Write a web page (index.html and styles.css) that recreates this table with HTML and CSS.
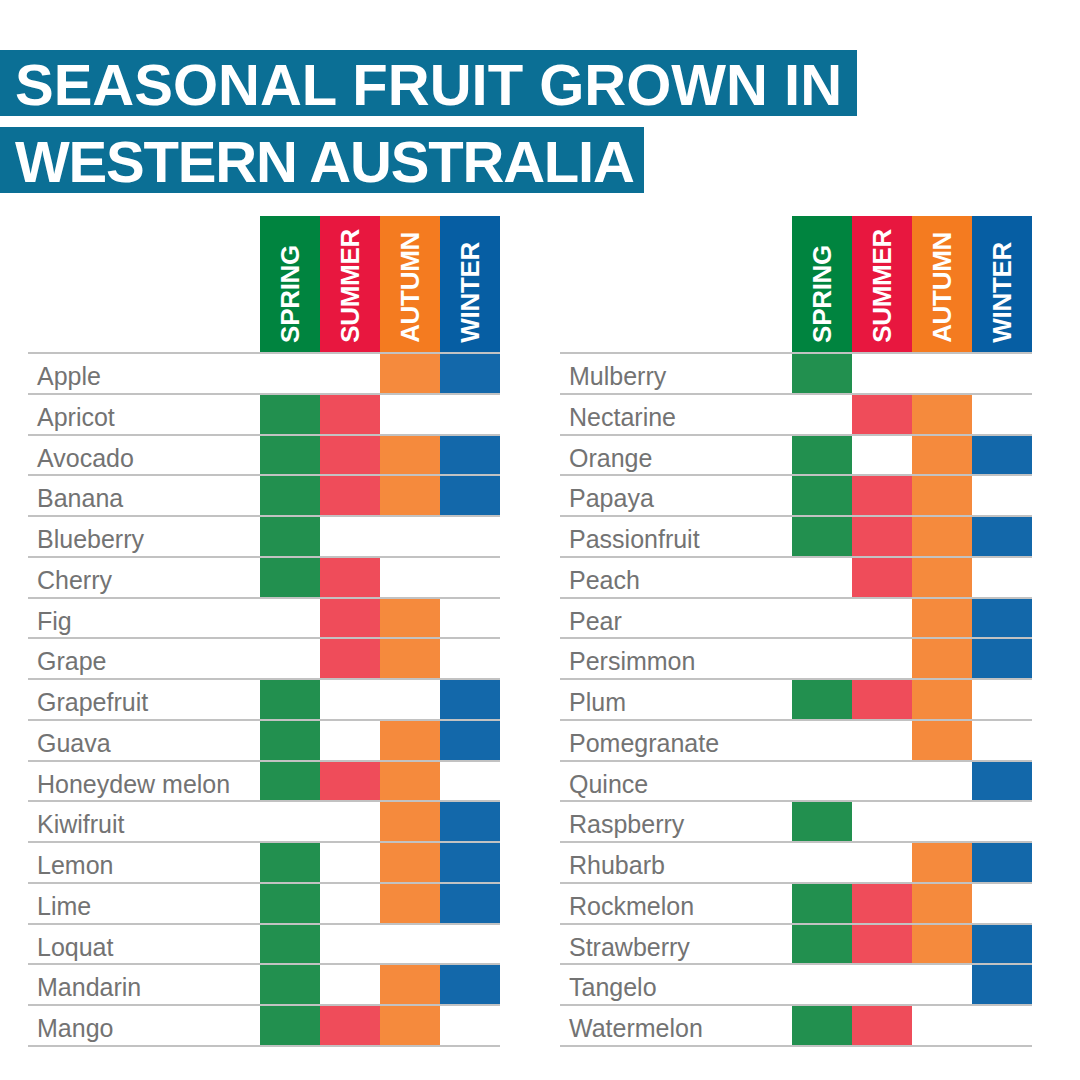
FILE: index.html
```html
<!DOCTYPE html>
<html lang="en">
<head>
<meta charset="utf-8">
<title>Seasonal fruit grown in Western Australia</title>
<link rel="stylesheet" href="styles.css">
</head>
<body>
<header class="title">
  <h1 class="bar bar-1">SEASONAL FRUIT GROWN IN</h1>
  <h1 class="bar bar-2">WESTERN AUSTRALIA</h1>
</header>
<main class="tables">
  <section class="chart">
    <div class="head">
      <div class="head-label"></div>
      <div class="hc sp"><span>SPRING</span></div>
      <div class="hc su"><span>SUMMER</span></div>
      <div class="hc au"><span>AUTUMN</span></div>
      <div class="hc wi"><span>WINTER</span></div>
    </div>
    <div class="body">
      <div class="row"><div class="name">Apple</div><div class="c"></div><div class="c"></div><div class="c au"></div><div class="c wi"></div></div>
      <div class="row"><div class="name">Apricot</div><div class="c sp"></div><div class="c su"></div><div class="c"></div><div class="c"></div></div>
      <div class="row"><div class="name">Avocado</div><div class="c sp"></div><div class="c su"></div><div class="c au"></div><div class="c wi"></div></div>
      <div class="row"><div class="name">Banana</div><div class="c sp"></div><div class="c su"></div><div class="c au"></div><div class="c wi"></div></div>
      <div class="row"><div class="name">Blueberry</div><div class="c sp"></div><div class="c"></div><div class="c"></div><div class="c"></div></div>
      <div class="row"><div class="name">Cherry</div><div class="c sp"></div><div class="c su"></div><div class="c"></div><div class="c"></div></div>
      <div class="row"><div class="name">Fig</div><div class="c"></div><div class="c su"></div><div class="c au"></div><div class="c"></div></div>
      <div class="row"><div class="name">Grape</div><div class="c"></div><div class="c su"></div><div class="c au"></div><div class="c"></div></div>
      <div class="row"><div class="name">Grapefruit</div><div class="c sp"></div><div class="c"></div><div class="c"></div><div class="c wi"></div></div>
      <div class="row"><div class="name">Guava</div><div class="c sp"></div><div class="c"></div><div class="c au"></div><div class="c wi"></div></div>
      <div class="row"><div class="name">Honeydew melon</div><div class="c sp"></div><div class="c su"></div><div class="c au"></div><div class="c"></div></div>
      <div class="row"><div class="name">Kiwifruit</div><div class="c"></div><div class="c"></div><div class="c au"></div><div class="c wi"></div></div>
      <div class="row"><div class="name">Lemon</div><div class="c sp"></div><div class="c"></div><div class="c au"></div><div class="c wi"></div></div>
      <div class="row"><div class="name">Lime</div><div class="c sp"></div><div class="c"></div><div class="c au"></div><div class="c wi"></div></div>
      <div class="row"><div class="name">Loquat</div><div class="c sp"></div><div class="c"></div><div class="c"></div><div class="c"></div></div>
      <div class="row"><div class="name">Mandarin</div><div class="c sp"></div><div class="c"></div><div class="c au"></div><div class="c wi"></div></div>
      <div class="row"><div class="name">Mango</div><div class="c sp"></div><div class="c su"></div><div class="c au"></div><div class="c"></div></div>
    </div>
  </section>
  <section class="chart">
    <div class="head">
      <div class="head-label"></div>
      <div class="hc sp"><span>SPRING</span></div>
      <div class="hc su"><span>SUMMER</span></div>
      <div class="hc au"><span>AUTUMN</span></div>
      <div class="hc wi"><span>WINTER</span></div>
    </div>
    <div class="body">
      <div class="row"><div class="name">Mulberry</div><div class="c sp"></div><div class="c"></div><div class="c"></div><div class="c"></div></div>
      <div class="row"><div class="name">Nectarine</div><div class="c"></div><div class="c su"></div><div class="c au"></div><div class="c"></div></div>
      <div class="row"><div class="name">Orange</div><div class="c sp"></div><div class="c"></div><div class="c au"></div><div class="c wi"></div></div>
      <div class="row"><div class="name">Papaya</div><div class="c sp"></div><div class="c su"></div><div class="c au"></div><div class="c"></div></div>
      <div class="row"><div class="name">Passionfruit</div><div class="c sp"></div><div class="c su"></div><div class="c au"></div><div class="c wi"></div></div>
      <div class="row"><div class="name">Peach</div><div class="c"></div><div class="c su"></div><div class="c au"></div><div class="c"></div></div>
      <div class="row"><div class="name">Pear</div><div class="c"></div><div class="c"></div><div class="c au"></div><div class="c wi"></div></div>
      <div class="row"><div class="name">Persimmon</div><div class="c"></div><div class="c"></div><div class="c au"></div><div class="c wi"></div></div>
      <div class="row"><div class="name">Plum</div><div class="c sp"></div><div class="c su"></div><div class="c au"></div><div class="c"></div></div>
      <div class="row"><div class="name">Pomegranate</div><div class="c"></div><div class="c"></div><div class="c au"></div><div class="c"></div></div>
      <div class="row"><div class="name">Quince</div><div class="c"></div><div class="c"></div><div class="c"></div><div class="c wi"></div></div>
      <div class="row"><div class="name">Raspberry</div><div class="c sp"></div><div class="c"></div><div class="c"></div><div class="c"></div></div>
      <div class="row"><div class="name">Rhubarb</div><div class="c"></div><div class="c"></div><div class="c au"></div><div class="c wi"></div></div>
      <div class="row"><div class="name">Rockmelon</div><div class="c sp"></div><div class="c su"></div><div class="c au"></div><div class="c"></div></div>
      <div class="row"><div class="name">Strawberry</div><div class="c sp"></div><div class="c su"></div><div class="c au"></div><div class="c wi"></div></div>
      <div class="row"><div class="name">Tangelo</div><div class="c"></div><div class="c"></div><div class="c"></div><div class="c wi"></div></div>
      <div class="row"><div class="name">Watermelon</div><div class="c sp"></div><div class="c su"></div><div class="c"></div><div class="c"></div></div>
    </div>
  </section>
</main>
</body>
</html>
```

FILE: styles.css
```css
html, body {
  margin: 0;
  padding: 0;
  background: #ffffff;
}

body {
  width: 1080px;
  height: 1080px;
  overflow: hidden;
  font-family: "Liberation Sans", Arial, sans-serif;
}

.title {
  display: flex;
  flex-direction: column;
  align-items: flex-start;
  gap: 11px;
  padding-top: 50px;
}

.bar {
  margin: 0;
  background: #0b6f95;
  color: #ffffff;
  font-family: "Liberation Sans", Arial, sans-serif;
  font-weight: 700;
  font-size: 58px;
  height: 66px;
  line-height: 69px;
  padding: 0 15px 0 15px;
  white-space: nowrap;
  box-sizing: border-box;
}

.bar-2 {
  letter-spacing: -1.2px;
  padding-right: 10px;
}

.tables {
  display: flex;
  gap: 60px;
  padding-left: 28px;
  margin-top: 23px;
}

.chart {
  width: 472px;
}

.head {
  display: grid;
  grid-template-columns: 232px repeat(4, 60px);
  height: 136px;
}

.hc {
  display: flex;
  flex-direction: column;
  justify-content: flex-end;
  align-items: center;
  padding-bottom: 9px;
  box-sizing: border-box;
}

.hc span {
  writing-mode: vertical-rl;
  transform: rotate(180deg);
  color: #ffffff;
  font-weight: 700;
  font-size: 26px;
  line-height: 26px;
  letter-spacing: -0.3px;
}

.hc.sp { background: #00843f; }
.hc.su { background: #e8173f; }
.hc.au { background: #f47b20; }
.hc.wi { background: #065ea3; }

.body {
  border-top: 2px solid #c2c2c2;
}

.row {
  display: grid;
  grid-template-columns: 232px repeat(4, 60px);
  height: 40.76px;
  box-sizing: border-box;
  border-bottom: 2px solid #c2c2c2;
}

.name {
  color: #737373;
  font-size: 25px;
  line-height: 25px;
  padding: 10px 0 0 9px;
  white-space: nowrap;
}

.c.sp { background: #22904f; }
.c.su { background: #ef4c5a; }
.c.au { background: #f58a3d; }
.c.wi { background: #1368aa; }
```
